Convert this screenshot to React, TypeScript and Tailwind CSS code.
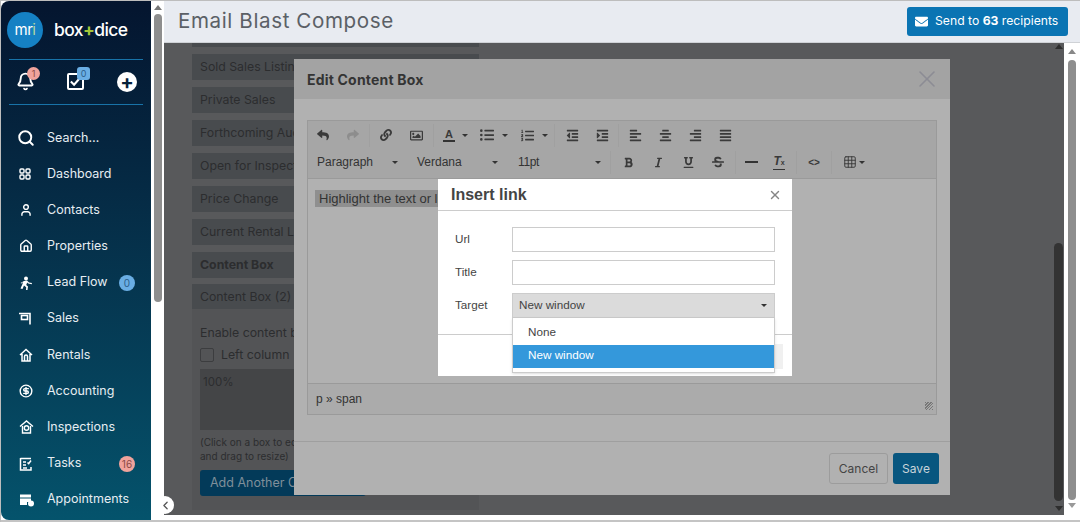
import React from 'react';
import { Bell, Search, User, House, CircleDollarSign, ChevronLeft, X, Grid3x3 } from 'lucide-react';
import {
  FaReply, FaShare, FaLink, FaRegImage, FaListUl, FaListOl, FaOutdent, FaIndent, FaAlignLeft, FaAlignCenter,
  FaAlignRight, FaAlignJustify, FaBold, FaItalic, FaUnderline, FaStrikethrough, FaEnvelope,
} from 'react-icons/fa';

const GridIcon = () => (
  <svg width="12" height="12" viewBox="0 0 12 12" fill="none" stroke="currentColor" strokeWidth="1.4">
    <rect x="1" y="1" width="4" height="4" rx="1" />
    <rect x="7" y="1" width="4" height="4" rx="1" />
    <rect x="1" y="7" width="4" height="4" rx="1" />
    <rect x="7" y="7" width="4" height="4" rx="1" />
  </svg>
);

const SignIcon = () => (
  <svg width="12" height="13" viewBox="0 0 12 13" fill="none" stroke="currentColor" strokeWidth="1.6">
    <path d="M0 1.5h11v11" />
    <rect x="2.5" y="3.5" width="6" height="4" />
  </svg>
);

const RunnerIcon = () => (
  <svg width="14" height="14" viewBox="0 0 14 14" fill="currentColor">
    <circle cx="7" cy="2.5" r="2" />
    <path d="M5 5l3-.5 2 2 3 .5-.3 1.300-3.500-.8-1-1-1 2.500 1.800 1.500-.5 3.500H7l.2-2.800L5 9.500 3.500 13 1.500 12.500 3.500 8l.5-2-1.500 1.500L1.500 7z" />
  </svg>
);

const RentalIcon = () => (
  <svg width="14" height="14" viewBox="0 0 14 14" fill="none" stroke="currentColor" strokeWidth="1.5">
    <path d="M1 7l6-5.500L13 7M3 6v7h8V6" />
    <path d="M5.500 13V8.500a1.500 1.500 0 0 1 3 0V13" />
  </svg>
);

const InspectIcon = () => (
  <svg width="15" height="14" viewBox="0 0 15 14" fill="none" stroke="currentColor" strokeWidth="1.4">
    <path d="M1 6.500L7.500 1 14 6.500M3.500 6v7h8V6" />
    <circle cx="7.500" cy="8" r="2.200" />
  </svg>
);

const TasksIcon = () => (
  <svg width="13" height="14" viewBox="0 0 13 14" fill="none" stroke="currentColor" strokeWidth="1.5">
    <path d="M1.500 1v12H12V10M1.500 1.500H12" />
    <path d="M4 5h3M4 8h3M4 11h4M8.500 5.500l1.200 1.200L12 3.500" />
  </svg>
);

const ApptIcon = () => (
  <svg width="16" height="15" viewBox="0 0 16 15">
    <path d="M1 2.500h11v3H1zM1 6.500h11V10H8v3H1z" fill="currentColor" />
    <circle cx="12" cy="11.500" r="3" fill="#fff" />
  </svg>
);

const navItems: { label: string; icon: React.ReactNode; badge?: string; tone?: string }[] = [
  { label: 'Dashboard', icon: <GridIcon /> },
  { label: 'Contacts', icon: <User size={14} strokeWidth={2.4} /> },
  { label: 'Properties', icon: <House size={14} strokeWidth={2.4} /> },
  { label: 'Lead Flow', icon: <RunnerIcon />, badge: '0', tone: 'bg-[#6aaee4] text-[#2d5f8a]' },
  { label: 'Sales', icon: <SignIcon /> },
  { label: 'Rentals', icon: <RentalIcon /> },
  { label: 'Accounting', icon: <CircleDollarSign size={14} strokeWidth={2.4} /> },
  { label: 'Inspections', icon: <InspectIcon /> },
  { label: 'Tasks', icon: <TasksIcon />, badge: '16', tone: 'bg-[#f0a39c] text-[#8a4a45]' },
  { label: 'Appointments', icon: <ApptIcon /> },
];

const sidePanels = ['Sold Sales Listings', 'Private Sales', 'Forthcoming Auctions', 'Open for Inspections', 'Price Change', 'Current Rental Listings'];

const ToolBtn = ({ children, faint, narrow }: { children: React.ReactNode; faint?: boolean; narrow?: boolean }) => (
  <span className={`flex h-[22px] items-center justify-center ${narrow ? 'w-[26px]' : 'w-[30px]'} ${faint ? 'text-[#8d8d8d]' : 'text-[#3a3a3a]'}`}>{children}</span>
);

const Sep = ({ compact }: { compact?: boolean }) => <span className={`w-px h-[23px] bg-[#a0a0a0] ${compact ? 'mx-[1px]' : 'mx-[2px]'}`} />;

const Caret = () => <span className="w-0 h-0 border-x-[3px] border-x-transparent border-t-[3px] border-t-[#333]" />;

const Sidebar = () => (
  <aside className="w-[150px] h-[519px] shrink-0 rounded-l-lg flex flex-col px-[8px] bg-gradient-to-b from-[#04152f] to-[#04536c] text-[#e6edf2] font-['Inter',sans-serif] text-[13px]">
    <div className="flex items-center h-[58px] -ml-[2px] shrink-0">
      <div className="w-[36px] h-[36px] rounded-full bg-[#1581c4] flex items-center justify-center text-white text-[15px] font-normal tracking-[-0.5px]">
        mr<span className="text-[#b6d7a0]">i</span>
      </div>
      <div className="ml-[11px] text-[17.500px] font-medium text-white tracking-[-0.6px] whitespace-nowrap">
        box<span className="text-[#a4c639] font-bold">+</span>dice
      </div>
    </div>
    <div className="h-[46px] border-y border-[#1873a8] flex items-center pl-[7px] pb-[1px] shrink-0">
      <span className="relative">
        <Bell size={19} strokeWidth={2.4} className="text-white" />
        <span className="absolute -top-[5px] left-[11px] w-[13px] h-[13px] rounded-full bg-[#f0a39c] text-[#8a4a45] text-[9px] leading-[13px] text-center">1</span>
      </span>
      <span className="relative ml-[32px]">
        <span className="block w-[17px] h-[17px] border-2 border-white rounded-[2px] text-white">
          <svg viewBox="0 0 14 14" className="w-[13px] h-[13px]" fill="none" stroke="currentColor" strokeWidth="2.2"><path d="M2 7l3.500 3.500L12 3" /></svg>
        </span>
        <span className="absolute -top-[6px] left-[10px] w-[13px] h-[13px] rounded-[3px] bg-[#6aaee4] text-[#2d5f8a] text-[9px] leading-[13px] text-center">0</span>
      </span>
      <span className="ml-[33px] w-[20px] h-[20px] rounded-full bg-white flex items-center justify-center text-[#04203a] text-[20px] font-bold leading-none">+</span>
    </div>
    <div className="flex items-center h-[36px] mt-[15px] pl-[8px] shrink-0">
      <Search size={18} strokeWidth={2.6} className="text-white" />
      <span className="ml-[12px] text-[12.500px]">Search…</span>
    </div>
    <nav className="flex flex-col">
      {navItems.map((item) => (
        <div key={item.label} className="flex items-center h-[36.200px] shrink-0">
          <span className="w-[38px] pl-[10px] text-white flex items-center">{item.icon}</span>
          <span className="whitespace-nowrap text-[12.500px]">{item.label}</span>
          {item.badge && (
            <span className={`ml-auto mr-[8px] h-[16px] min-w-[16px] px-[1px] rounded-full text-[10px] leading-[16px] text-center ${item.tone}`}>{item.badge}</span>
          )}
        </div>
      ))}
    </nav>
  </aside>
);

const LinkDialog = () => (
  <div className="absolute left-[144px] top-[120px] w-[354px] h-[197px] bg-white font-['Liberation_Sans',sans-serif] text-[#444] text-[11.700px]">
    <div className="h-[32px] border-b border-[#ccc] flex items-center justify-between pl-[13px] pr-[10px]">
      <span className="text-[16px] font-bold text-[#444]">Insert link</span>
      <X size={14} strokeWidth={2.4} className="text-[#858585]" />
    </div>
    <div className="h-[124px] border-b border-[#ccc] px-[17px] pt-[16px] flex flex-col gap-[8px]">
      <div className="flex items-center h-[25px]">
        <span className="w-[57px] pb-[2px]">Url</span>
        <span className="flex-1 h-full border border-[#ccc]" />
      </div>
      <div className="flex items-center h-[25px]">
        <span className="w-[57px] pb-[2px]">Title</span>
        <span className="flex-1 h-full border border-[#ccc]" />
      </div>
      <div className="flex items-center h-[25px]">
        <span className="w-[57px] pb-[2px]">Target</span>
        <span className="flex-1 h-full bg-[#dbdbdb] border border-[#ccc] flex items-center justify-between pl-[6px] pr-[7px] pb-[1px]">
          New window
          <Caret />
        </span>
      </div>
    </div>
    <div className="flex justify-end pr-[9px] pt-[9px]">
      <span className="w-[30px] h-[25px] bg-[#f0f0f0]" />
    </div>
    <div className="absolute left-[74px] top-[139px] w-[263px] h-[55px] bg-white border border-t-0 border-[#ccc] pt-[4px] shadow-sm">
      <div className="h-[23px] pl-[15px] leading-[20px]">None</div>
      <div className="h-[23px] pl-[15px] leading-[20px] bg-[#3498db] text-white">New window</div>
    </div>
  </div>
);

const EditModal = () => (
  <div className="absolute left-[130px] top-[16px] w-[656px] h-[436px] bg-[#b1b1b1] flex flex-col">
    <div className="h-[40px] bg-[#a3a3a3] flex items-center justify-between pl-[13px] pr-[9px] shrink-0">
      <span className="font-['Inter',sans-serif] font-bold text-[14px] tracking-[0.2px] text-[#343434]">Edit Content Box</span>
      <X size={28} strokeWidth={1.3} className="text-[#8c8c94]" />
    </div>
    <div className="mx-[13px] mt-[21px] h-[295px] border border-[#9a9a9a] flex flex-col shrink-0">
      <div className="h-[58px] border-b border-[#9a9a9a] bg-[#a6a6a6] shrink-0 font-['Liberation_Sans',sans-serif] text-[12px] text-[#333]">
        <div className="h-[28px] flex items-center">
          <ToolBtn><FaReply size={12} /></ToolBtn>
          <ToolBtn faint><FaShare size={12} /></ToolBtn>
          <Sep compact />
          <ToolBtn><FaLink size={12} /></ToolBtn>
          <ToolBtn><FaRegImage size={13} /></ToolBtn>
          <Sep />
          <ToolBtn narrow><span className="border-b-2 border-[#333] font-bold text-[11px] leading-[12px] px-[2px]">A</span></ToolBtn>
          <span className="w-[10px] flex"><Caret /></span>
          <ToolBtn><FaListUl size={14} /></ToolBtn>
          <span className="w-[10px] flex"><Caret /></span>
          <ToolBtn><FaListOl size={13} /></ToolBtn>
          <span className="w-[10px] flex"><Caret /></span>
          <Sep />
          <ToolBtn><FaOutdent size={13} /></ToolBtn>
          <ToolBtn><FaIndent size={13} /></ToolBtn>
          <Sep compact />
          <ToolBtn><FaAlignLeft size={13} /></ToolBtn>
          <ToolBtn><FaAlignCenter size={13} /></ToolBtn>
          <ToolBtn><FaAlignRight size={13} /></ToolBtn>
          <ToolBtn><FaAlignJustify size={13} /></ToolBtn>
        </div>
        <div className="h-[26px] flex items-center">
          <span className="w-[100px] pl-[9px] flex items-center justify-between pr-[10px]">Paragraph<Caret /></span>
          <span className="w-[100px] pl-[9px] flex items-center justify-between pr-[10px]">Verdana<Caret /></span>
          <span className="w-[100px] pl-[10px] flex items-center justify-between pr-[7px] tracking-[-0.4px]">11pt<Caret /></span>
          <Sep />
          <ToolBtn><FaBold size={11} /></ToolBtn>
          <ToolBtn><FaItalic size={11} /></ToolBtn>
          <ToolBtn><FaUnderline size={11} /></ToolBtn>
          <ToolBtn><FaStrikethrough size={12} /></ToolBtn>
          <Sep />
          <ToolBtn narrow><span className="w-[13px] h-[2px] bg-[#333]" /></ToolBtn>
          <ToolBtn><span className="border-b border-[#333] italic font-bold text-[12px] leading-[12px]">T<span className="text-[7px] not-italic">x</span></span></ToolBtn>
          <Sep />
          <ToolBtn><span className="text-[10px] font-bold">&lt;&gt;</span></ToolBtn>
          <Sep />
          <span className="flex items-center gap-[2px] pl-[9px]"><Grid3x3 size={14} strokeWidth={1.5} /><Caret /></span>
        </div>
      </div>
      <div className="flex-1 pt-[10px] pl-[7px] font-['Liberation_Sans',sans-serif] text-[13px] text-[#333]">
        <span className="bg-[#8f8f8f] px-[4px] py-[1px]">Highlight the text or link</span>
      </div>
      <div className="h-[31px] border-t border-[#9a9a9a] bg-[#ababab] pl-[8px] flex items-center justify-between pr-[3px] font-['Liberation_Sans',sans-serif] text-[12px] text-[#333] shrink-0">
        <span>p » span</span>
        <span className="w-[8px] h-[8px] mt-[14px] bg-[repeating-linear-gradient(135deg,#777_0_1px,transparent_1px_2px)]" />
      </div>
    </div>
    <div className="mt-[26px] border-t border-[#9f9f9f] flex justify-end gap-[5px] pt-[11px] pr-[11px] font-['Inter',sans-serif] text-[12px]">
      <span className="w-[59px] h-[31px] border border-[#9c9c9c] rounded-[3px] flex items-center justify-center text-[#444]">Cancel</span>
      <span className="w-[46px] h-[31px] bg-[#08567f] rounded-[3px] flex items-center justify-center text-[#c9d4da]">Save</span>
    </div>
    <LinkDialog />
  </div>
);

const BackgroundPanel = () => (
  <div className="w-[900px] h-[472px] bg-[#58595b] pl-[28px] overflow-hidden font-['Inter',sans-serif] text-[12.300px] text-[#2c2d2f] shrink-0">
    <div className="w-[287px] h-[4px] bg-[#484b4e]" />
    <div className="w-[287px] flex flex-col gap-[7px] mt-[7px]">
      {sidePanels.map((title) => (
        <div key={title} className="h-[26px] bg-[#484b4e] pl-[8px] leading-[26px] whitespace-nowrap overflow-hidden">{title}</div>
      ))}
      <div className="h-[26px] bg-[#484b4e] pl-[8px] leading-[26px] font-bold">Content Box</div>
    </div>
    <div className="w-[287px] mt-[6px] h-[226px] bg-[#535456]">
      <div className="h-[25px] bg-[#484b4e] pl-[8px] leading-[25px]">Content Box (2)</div>
      <div className="px-[8px] pt-[16px]">
        <div className="leading-[16px]">Enable content box</div>
        <div className="flex items-center mt-[7px] h-[14px]">
          <span className="w-[14px] h-[14px] border border-[#3c3d3f] rounded-[2px]" />
          <span className="ml-[7px]">Left column</span>
        </div>
        <div className="mt-[7px] h-[61px] bg-[#444547] pl-[3px] pt-[5px] text-[11.500px]">100%</div>
        <div className="mt-[6px] text-[10px] leading-[13.500px]">
          (Click on a box to edit
          <br />
          and drag to resize)
        </div>
        <div className="mt-[7px] w-[166px] h-[26px] bg-[#033a59] rounded-[3px] pl-[10px] leading-[26px] text-[#7f8f9a] text-[12.500px] whitespace-nowrap">Add Another Column</div>
      </div>
    </div>
  </div>
);

export default function App() {
  return (
    <div className="relative w-[1080px] h-[522px] overflow-hidden bg-white border-t border-l border-[#bdbdbd] flex">
      <Sidebar />
      <div className="w-[13px] shrink-0 flex flex-col items-center pt-[4px]">
        <span className="w-0 h-0 border-x-[4px] border-x-transparent border-b-[5px] border-b-[#777]" />
        <span className="block w-[8px] h-[288px] mt-[4px] rounded-full bg-[#8e8e8e]" />
      </div>
      <main className="flex-1 min-w-0 flex flex-col">
        <header className="h-[42px] shrink-0 bg-[#e8ebf1] flex items-center justify-between pl-[14px] pr-[12px] border-b border-[#cfd2d6]">
          <h1 className="font-['Inter',sans-serif] text-[20.600px] text-[#5b6066] tracking-[0.6px]">Email Blast Compose</h1>
          <button className="w-[161px] h-[29px] bg-[#0a74b3] rounded-[3px] text-white text-[12.200px] flex items-center pl-[8px] font-['Inter',sans-serif]">
            <FaEnvelope size={13} className="mr-[7px]" />
            Send to&nbsp;<b>63</b>&nbsp;recipients
          </button>
        </header>
        <div className="flex">
          <div className="relative">
            <BackgroundPanel />
            <div className="absolute right-[1px] top-0 w-[9px] h-[472px] flex flex-col items-center justify-between">
              <span className="mt-[1px] w-0 h-0 border-x-[4px] border-x-transparent border-b-[5px] border-b-[#2e2e2e]" />
              <span className="block w-[9px] h-[258px] mt-auto rounded-full bg-[#333]" />
              <span className="mt-[5px] mb-[4px] w-0 h-0 border-x-[4px] border-x-transparent border-t-[5px] border-t-[#2e2e2e]" />
            </div>
            <EditModal />
          </div>
          <div className="flex-1 flex flex-col items-center pt-[6px]">
            <span className="w-0 h-0 border-x-[4px] border-x-transparent border-b-[5px] border-b-[#888]" />
            <span className="block w-[8px] h-[440px] mt-[6px] rounded-full bg-[#8e8e8e]" />
            <span className="mt-[3px] w-0 h-0 border-x-[4px] border-x-transparent border-t-[5px] border-t-[#999]" />
          </div>
        </div>
      </main>
      <span className="absolute left-[155px] top-[495px] w-[18px] h-[18px] rounded-full bg-white flex items-center justify-center text-[#555]">
        <ChevronLeft size={13} strokeWidth={2.4} />
      </span>
      <span className="absolute left-0 right-0 bottom-0 h-[2px] bg-[#c4c4c4]" />
    </div>
  );
}
